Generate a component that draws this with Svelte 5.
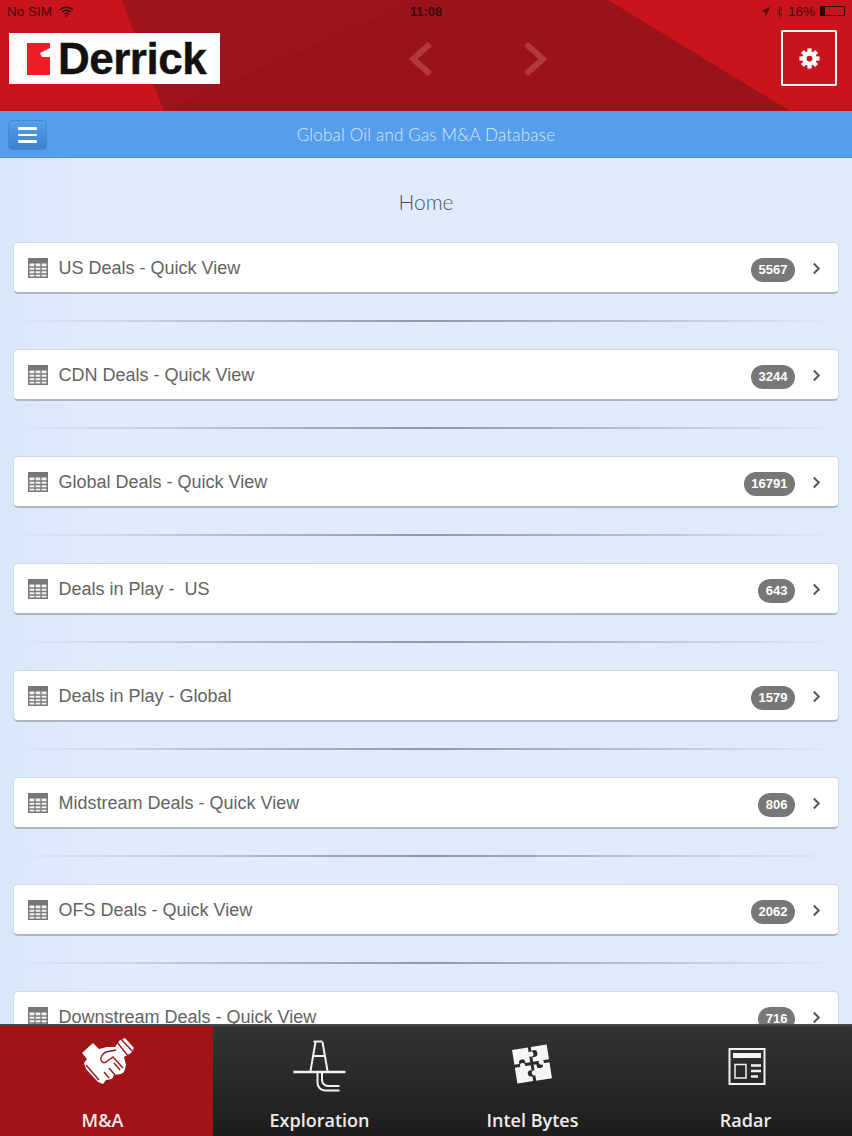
<script lang="ts">
    const rows = [
        { label: "US Deals - Quick View", count: 5567 },
        { label: "CDN Deals - Quick View", count: 3244 },
        { label: "Global Deals - Quick View", count: 16791 },
        { label: "Deals in Play -  US", count: 643 },
        { label: "Deals in Play - Global", count: 1579 },
        { label: "Midstream Deals - Quick View", count: 806 },
        { label: "OFS Deals - Quick View", count: 2062 },
        { label: "Downstream Deals - Quick View", count: 716 },
    ];
    const teeth = [0, 45, 90, 135, 180, 225, 270, 315];
</script>

<div class="page">
    <header class="top">
        <svg class="top-bg" viewBox="0 0 852 111" preserveAspectRatio="none" aria-hidden="true">
            <polygon points="122,0 608,0 790,111 164,111" fill="#9a121a" />
            <polygon points="122,0 420,0 164,111" fill="#9f141c" />
        </svg>

        <div class="status">
            <div class="status-side">
                <span>No SIM</span>
                <svg viewBox="0 0 16 12" width="15" height="11" aria-hidden="true">
                    <path d="M1 4.200a10 10 0 0 1 14 0M3.400 6.600a6.600 6.600 0 0 1 9.200 0M5.700 8.800a3.200 3.200 0 0 1 4.600 0" fill="none" stroke="#2a0a0a" stroke-width="1.600" />
                    <circle cx="8" cy="10.600" r="1.200" fill="#2a0a0a" />
                </svg>
            </div>
            <span class="clock">11:08</span>
            <div class="status-side status-right">
                <svg viewBox="0 0 12 12" width="11" height="11" aria-hidden="true">
                    <path d="M11 1 1 6h5v5z" fill="#2a0a0a" />
                </svg>
                <svg viewBox="0 0 8 14" width="7" height="13" aria-hidden="true">
                    <path d="M1 4l6 6-3 3V1l3 3-6 6" fill="none" stroke="#5a1015" stroke-width="1" />
                </svg>
                <span>16%</span>
                <span class="battery"><span class="battery-fill"></span></span>
            </div>
        </div>

        <div class="brand-row">
            <div class="logo">
                <svg viewBox="0 0 23 32" width="23" height="32" aria-hidden="true">
                    <path d="M0 0h23v5l-10 5 2 4h8v18H0z" fill="#ee1c25" />
                </svg>
                <span class="logo-text">Derrick</span>
            </div>
            <div class="arrows">
                <svg viewBox="0 0 28 36" width="28" height="36" aria-hidden="true">
                    <path d="M23 3 6 18l17 15" />
                </svg>
                <svg viewBox="0 0 28 36" width="28" height="36" aria-hidden="true">
                    <path d="M5 3l17 15L5 33" />
                </svg>
            </div>
            <button type="button" class="settings" aria-label="Settings">
                <svg viewBox="0 0 24 24" width="23" height="23" aria-hidden="true">
                    <circle cx="12" cy="12" r="7.500" fill="#fff" />
                    {#each teeth as t}
                        <rect x="9.800" y="1.500" width="4.400" height="6" fill="#fff" transform="rotate({t} 12 12)" />
                    {/each}
                    <circle cx="12" cy="12" r="3" fill="#c2141a" />
                </svg>
            </button>
        </div>
    </header>

    <div class="subbar">
        <button type="button" class="menu" aria-label="Menu">
            <span></span><span></span><span></span>
        </button>
        <span class="subbar-title">Global Oil and Gas M&amp;A Database</span>
    </div>

    <main class="content">
        <h1>Home</h1>
        {#each rows as row}
            <div class="row">
                <svg class="table-icon" viewBox="0 0 20 20" width="20" height="20" aria-hidden="true">
                    <rect x="0.750" y="0.750" width="18.500" height="18.500" fill="#f4f4f4" stroke="#777" stroke-width="1.500" />
                    <rect x="0" y="0" width="20" height="5.500" fill="#777" />
                    <path d="M0 9h20M0 12.500h20M0 16h20M7 5v15M13 5v15" stroke="#7c7c7c" stroke-width="1.300" />
                </svg>
                <span class="row-label">{row.label}</span>
                <span class="badge">{row.count}</span>
                <svg class="chev" viewBox="0 0 10 14" width="9" height="13" aria-hidden="true">
                    <path d="M2 1.500 7.500 7 2 12.500" />
                </svg>
            </div>
            <div class="divider"></div>
        {/each}
    </main>

    <nav class="tabs">
        <div class="tab tab--active">
            <svg viewBox="0 0 72 60" width="72" height="60" aria-hidden="true">
                <path fill="#fff" d="M11 21 22 11l6 6 8-2h8l5-7 5-2 9 10-3 5-7 4 2 8-2 7-3 2-7 1-2 4-6 1-3 4-5-2-12-13-2-6 3-4z" />
                <g fill="none" stroke="#a01418" stroke-width="1.400">
                    <path d="M46 10l11 14M50 7l11 12" />
                    <path d="M45 18 35 20c-4 2-6 6-5 8 1 3 3 3 5 2l7-5 10 11" />
                    <path d="M43 31l6 7M38 36l6 7M33 40l5 6" />
                    <path d="M15 33l13 15" />
                </g>
            </svg>
            <span class="tab-label--shift">M&amp;A</span>
        </div>
        <div class="tab">
            <svg viewBox="0 0 72 60" width="72" height="60" fill="none" stroke="#f2f2f2" stroke-width="2" aria-hidden="true">
                <path d="M9.500 40h52" stroke-width="2.600" />
                <path d="M31.500 10 26.500 39M38.500 10l5 29M29.500 9.500h9M28.500 24h13" />
                <path d="M33.500 41v10a7.500 7.500 0 0 0 7.500 7.500h14.500M38 41v7a6 6 0 0 0 6 6h11.500" />
            </svg>
            <span>Exploration</span>
        </div>
        <div class="tab">
            <svg viewBox="0 0 72 60" width="72" height="60" aria-hidden="true">
                <g transform="translate(17.500 15) rotate(-9 18 17)">
                    <g fill="#f6f6f6">
                        <rect x="0" y="0" width="16" height="15" />
                        <rect x="19" y="0" width="16" height="15" />
                        <rect x="0" y="18" width="16" height="16" />
                        <rect x="19" y="18" width="16" height="16" />
                    </g>
                    <g fill="#2a2a2a">
                        <circle cx="21" cy="7" r="3.500" />
                        <circle cx="8" cy="14" r="3.200" />
                        <circle cx="25" cy="19" r="3.200" />
                        <circle cx="15" cy="26" r="3.200" />
                    </g>
                    <g fill="#f6f6f6">
                        <circle cx="18" cy="7" r="2.600" />
                        <circle cx="8" cy="17" r="2.600" />
                        <circle cx="27" cy="16.500" r="2.600" />
                        <circle cx="18.500" cy="26" r="2.600" />
                    </g>
                </g>
            </svg>
            <span>Intel Bytes</span>
        </div>
        <div class="tab">
            <svg viewBox="0 0 72 60" width="72" height="60" fill="none" aria-hidden="true">
                <rect x="19.500" y="17" width="35" height="35" stroke="#f2f2f2" stroke-width="2" />
                <rect x="23" y="21" width="28" height="5" fill="#f2f2f2" />
                <rect x="25" y="32.500" width="11" height="13.500" stroke="#f2f2f2" stroke-width="1.500" />
                <path d="M41 33.500h10M41 39h10M41 44.500h7" stroke="#f2f2f2" stroke-width="2.400" />
            </svg>
            <span>Radar</span>
        </div>
    </nav>
</div>

<style>
    :global(body) {
        margin: 0;
    }

    .page {
        width: 852px;
        height: 1136px;
        display: flex;
        flex-direction: column;
        overflow: hidden;
        font-family: "Liberation Sans", Arial, sans-serif;
        background: #deebfb;
    }

    /* Red header */
    .top {
        position: relative;
        height: 111px;
        flex: none;
        background: #c8141a;
        display: flex;
        flex-direction: column;
    }

    .top-bg {
        position: absolute;
        inset: 0;
        width: 100%;
        height: 100%;
    }

    .status {
        position: relative;
        height: 22px;
        padding: 0 7px;
        display: grid;
        grid-template-columns: 1fr auto 1fr;
        align-items: center;
        font-size: 13.500px;
        color: #3a0c0e;
    }

    .status-side {
        display: flex;
        align-items: center;
        gap: 7px;
    }

    .status-right {
        justify-content: flex-end;
        gap: 5px;
    }

    .clock {
        font-size: 13px;
        font-weight: 700;
        color: #3a0c0e;
    }

    .battery {
        width: 23px;
        height: 8px;
        border: 1px solid #2a0a0a;
        border-radius: 1px;
        display: block;
    }

    .battery-fill {
        display: block;
        width: 4px;
        height: 100%;
        background: #1c0606;
    }

    .brand-row {
        position: relative;
        flex: 1;
        display: flex;
        align-items: flex-start;
    }

    .logo {
        margin: 11px 0 0 9px;
        width: 211px;
        height: 51px;
        box-sizing: border-box;
        padding-left: 18px;
        background: #fff;
        display: flex;
        align-items: center;
        gap: 8px;
    }

    .logo-text {
        font-size: 44px;
        font-weight: 700;
        letter-spacing: -0.500px;
        color: #111;
        line-height: 1;
        -webkit-text-stroke: 0.400px #111;
    }

    .arrows {
        margin: 19px 0 0 187px;
        display: flex;
        gap: 86px;
    }

    .arrows path {
        fill: none;
        stroke: #b3383e;
        stroke-width: 6;
    }

    .settings {
        margin: 8px 15px 0 auto;
        width: 56px;
        height: 56px;
        padding: 0;
        background: transparent;
        border: 2px solid #fff;
        border-radius: 2px;
        display: flex;
        align-items: center;
        justify-content: center;
    }

    /* Blue title bar */
    .subbar {
        position: relative;
        height: 47px;
        flex: none;
        box-sizing: border-box;
        background: #559ded;
        border-bottom: 1px solid #4a90e2;
        display: flex;
        align-items: center;
        justify-content: center;
    }

    .subbar-title {
        font-family: Lato, sans-serif;
        font-weight: 300;
        font-size: 17px;
        color: #dceafa;
        letter-spacing: 0.200px;
    }

    .menu {
        position: absolute;
        left: 8px;
        top: 9px;
        width: 39px;
        height: 30px;
        padding: 0;
        border: 1px solid #4a88cf;
        border-radius: 4px;
        background: linear-gradient(#559fea, #3a80cf);
        display: flex;
        flex-direction: column;
        align-items: center;
        justify-content: center;
        gap: 4px;
    }

    .menu span {
        width: 19px;
        height: 2.500px;
        background: #fff;
        border-radius: 1px;
    }

    /* List */
    .content {
        flex: 1;
        min-height: 0;
        overflow: hidden;
        padding: 0 13px;
        background: linear-gradient(90deg, #d8e7f9, #e0ecfc 12%, #deebfb);
    }

    h1 {
        margin: 0;
        height: 84px;
        padding-top: 31px;
        box-sizing: border-box;
        text-align: center;
        font-family: Lato, sans-serif;
        font-weight: 300;
        font-size: 21px;
        line-height: 26px;
        color: #555;
    }

    .row {
        height: 52px;
        box-sizing: border-box;
        background: #fff;
        border: 1px solid #d0d8e2;
        border-bottom: 2px solid #aeb6c2;
        border-radius: 5px;
        display: flex;
        align-items: center;
        padding: 2px 17px 0 14px;
    }

    .table-icon {
        flex: none;
        margin: -2px 10.500px 0 0;
    }

    .row-label {
        flex: 1;
        font-size: 18px;
        color: #636363;
        white-space: pre;
    }

    .badge {
        height: 24px;
        padding: 0 7.500px;
        margin-top: 2px;
        border-radius: 12px;
        background: #777;
        color: #fff;
        font-size: 13px;
        font-weight: 700;
        line-height: 24px;
    }

    .chev {
        margin-left: 17px;
    }

    .chev path {
        fill: none;
        stroke: #555;
        stroke-width: 2.200;
    }

    .divider {
        height: 55px;
        background: linear-gradient(90deg, transparent, #8d98a4 50%, transparent) center 26px / 100% 2px no-repeat;
    }

    /* Bottom tabs */
    .tabs {
        height: 112px;
        flex: none;
        box-sizing: border-box;
        border-top: 2px solid #4a4a4a;
        background: linear-gradient(#343434, #1d1d1d);
        display: grid;
        grid-template-columns: repeat(4, 1fr);
    }

    .tab {
        display: flex;
        flex-direction: column;
        align-items: center;
        justify-content: flex-end;
        padding-bottom: 3px;
        color: #ececec;
        font-family: "Open Sans", sans-serif;
        font-weight: 600;
        font-size: 18px;
        line-height: 26px;
    }

    .tab svg {
        margin-bottom: 15px;
    }

    .tab--active {
        background: #a01418;
    }

    .tab-label--shift {
        margin-right: 8px;
    }
</style>
